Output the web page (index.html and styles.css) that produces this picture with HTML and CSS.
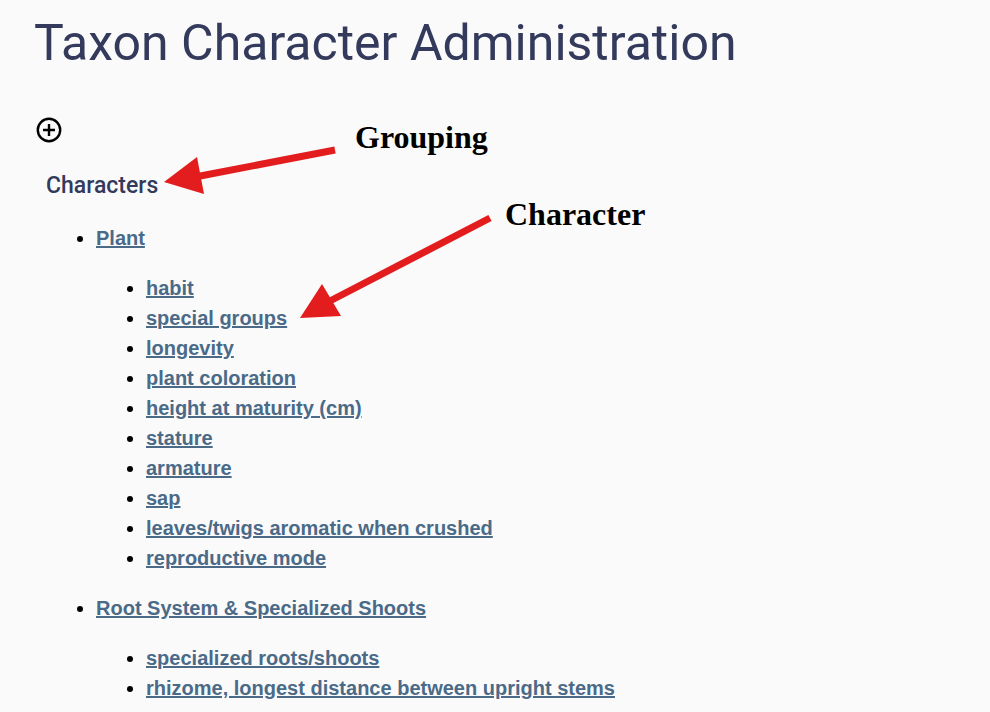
FILE: index.html
```html
<!DOCTYPE html>
<html lang="en">
<head>
<meta charset="utf-8">
<title>Taxon Character Administration</title>
<link rel="stylesheet" href="styles.css">
</head>
<body>
<div class="page">
  <h1 class="title">Taxon Character Administration</h1>
  <div class="toolbar">
    <svg class="add-icon" viewBox="0 0 26 26" width="26" height="26" aria-label="add">
      <circle cx="13" cy="13" r="11.2" fill="none" stroke="#000" stroke-width="2.4"/>
      <path d="M13 7v12M7 13h12" stroke="#000" stroke-width="2.4" fill="none"/>
    </svg>
  </div>
  <h2 class="group-title">Characters</h2>
  <ul class="groups">
    <li>
      <a href="#">Plant</a>
      <ul class="chars">
        <li><a href="#">habit</a></li>
        <li><a href="#">special groups</a></li>
        <li><a href="#">longevity</a></li>
        <li><a href="#">plant coloration</a></li>
        <li><a href="#">height at maturity (cm)</a></li>
        <li><a href="#">stature</a></li>
        <li><a href="#">armature</a></li>
        <li><a href="#">sap</a></li>
        <li><a href="#">leaves/twigs aromatic when crushed</a></li>
        <li><a href="#">reproductive mode</a></li>
      </ul>
    </li>
    <li>
      <a href="#">Root System &amp; Specialized Shoots</a>
      <ul class="chars">
        <li><a href="#">specialized roots/shoots</a></li>
        <li><a href="#">rhizome, longest distance between upright stems</a></li>
      </ul>
    </li>
  </ul>
</div>
<div class="annotations">
  <svg class="arrows" viewBox="0 0 990 712" width="990" height="712">
    <line x1="335" y1="150" x2="195" y2="177" stroke="#e31d1d" stroke-width="7"/>
    <polygon points="164,182 197,157 204,194" fill="#e31d1d"/>
    <line x1="490" y1="218" x2="328" y2="302" stroke="#e31d1d" stroke-width="7"/>
    <polygon points="300,318 322,284 341,316" fill="#e31d1d"/>
  </svg>
  <span class="label label-grouping">Grouping</span>
  <span class="label label-character">Character</span>
</div>
</body>
</html>
```

FILE: styles.css
```css
html, body {
  margin: 0;
  padding: 0;
}
body {
  background: #fafafa;
  width: 990px;
  height: 712px;
  overflow: hidden;
  position: relative;
}
.page {
  padding: 14px 0 0 34px;
}
.title {
  font-family: Roboto, "Liberation Sans", sans-serif;
  font-weight: 400;
  font-size: 50px;
  line-height: 58px;
  color: #333a5c;
  margin: 0;
}
.toolbar {
  display: flex;
  margin: 45px 0 0 2px;
  height: 26px;
}
.add-icon {
  display: block;
}
.group-title {
  font-family: Roboto, "Liberation Sans", sans-serif;
  font-weight: 500;
  font-size: 23px;
  line-height: 26px;
  color: #333a5c;
  margin: 30px 0 0 12px;
}
.groups, .chars {
  list-style: disc;
  padding-left: 50px;
  margin: 0;
  font-family: "Liberation Sans", Arial, sans-serif;
  font-weight: 700;
  font-size: 20px;
  line-height: 30px;
}
.groups {
  margin-top: 24px;
  padding-left: 62px;
}
.chars {
  margin: 20px 0;
}
.groups li::marker {
  color: #000;
}
.groups a {
  color: #4a6a88;
  text-decoration: underline;
}
.annotations {
  position: absolute;
  left: 0;
  top: 0;
  width: 990px;
  height: 712px;
  pointer-events: none;
}
.arrows {
  position: absolute;
  left: 0;
  top: 0;
}
.label {
  position: absolute;
  font-family: "Liberation Serif", "Times New Roman", serif;
  font-weight: 700;
  font-size: 32px;
  line-height: 36px;
  color: #000;
}
.label-grouping {
  left: 355px;
  top: 119px;
}
.label-character {
  left: 505px;
  top: 196px;
}
```
